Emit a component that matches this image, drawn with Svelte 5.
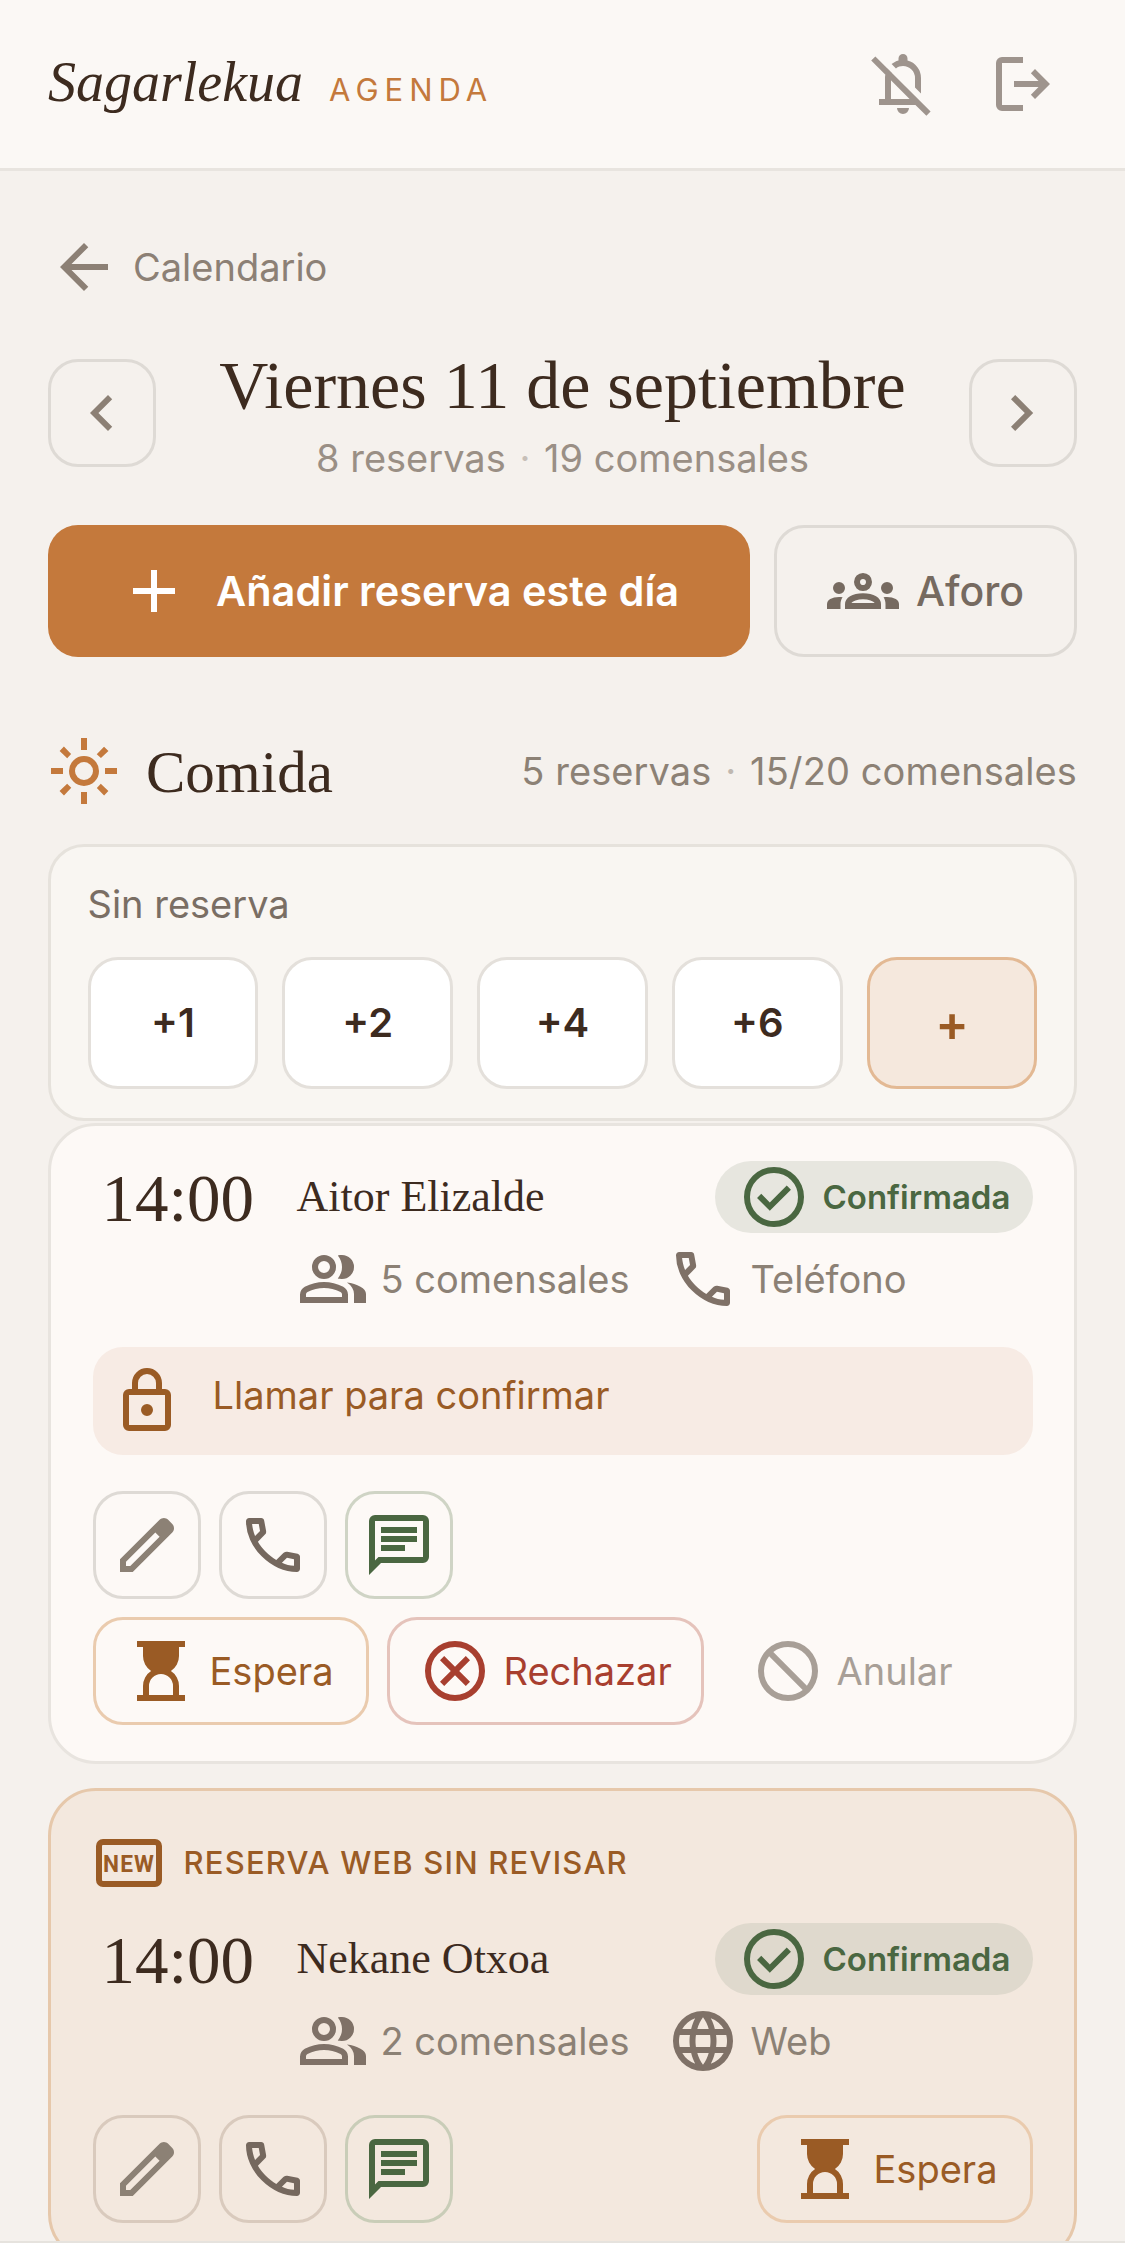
<script>
  const icons = {
    bellOff: "M160-200v-80h80v-280q0-33 8.5-65t25.5-61l60 60q-7 16-10.5 32.5T320-560v280h248L56-792l56-56 736 736-56 56-146-144H160Zm560-154-80-80v-126q0-66-47-113t-113-47q-26 0-50 8t-44 24l-58-58q20-16 43-28t49-18v-28q0-25 17.5-42.5T480-880q25 0 42.5 17.5T540-820v28q80 20 130 84.5T720-560v206ZM480-80q-33 0-56.5-23.5T400-160h160q0 33-23.5 56.5T480-80Z",
    logout: "M200-120q-33 0-56.5-23.5T120-200v-560q0-33 23.5-56.5T200-840h280v80H200v560h280v80H200Zm440-160-55-58 102-102H360v-80h327L585-622l55-58 200 200-200 200Z",
    back: "M313-440l224 224-57 56-320-320 320-320 57 56-224 224h487v80H313Z",
    left: "M560-240 320-480l240-240 56 56-184 184 184 184-56 56Z",
    right: "M504-480 320-664l56-56 240 240-240 240-56-56 184-184Z",
    add: "M440-440H200v-80h240v-240h80v240h240v80H520v240h-80v-240Z",
    groups: "M0-240v-63q0-43 44-70t116-27q13 0 25 .5t23 2.5q-14 21-21 44t-7 48v65H0Zm240 0v-65q0-32 17.5-58.5T307-410q32-20 76.5-30t96.5-10q53 0 97.5 10t76.5 30q32 20 49 46.5t17 58.5v65H240Zm540 0v-65q0-26-6.5-49T754-397q11-2 22.5-2.5t23.5-.5q72 0 116 26.5t44 70.5v63H780Zm-455-80h311q-10-20-55.5-35T480-370q-55 0-100.5 15T325-320ZM160-440q-33 0-56.5-23.5T80-520q0-34 23.5-57t56.5-23q34 0 57 23t23 57q0 33-23 56.5T160-440Zm640 0q-33 0-56.5-23.5T720-520q0-34 23.5-57t56.5-23q34 0 57 23t23 57q0 33-23 56.5T800-440Zm-320-40q-50 0-85-35t-35-85q0-51 35-85.5t85-34.5q51 0 85.5 34.5T600-600q0 50-34.5 85T480-480Zm0-80q17 0 28.5-11.5T520-600q0-17-11.5-28.5T480-640q-17 0-28.5 11.5T440-600q0 17 11.5 28.5T480-560Z",
    sun: "M480-360q50 0 85-35t35-85q0-50-35-85t-85-35q-50 0-85 35t-35 85q0 50 35 85t85 35Zm0 80q-83 0-141.5-58.5T280-480q0-83 58.5-141.5T480-680q83 0 141.5 58.5T680-480q0 83-58.5 141.5T480-280ZM200-440H40v-80h160v80Zm720 0H760v-80h160v80ZM440-760v-160h80v160h-80Zm0 720v-160h80v160h-80ZM256-650l-101-97 57-59 96 100-52 56Zm492 496-97-101 53-55 101 97-57 59Zm-98-550 97-101 59 57-100 96-56-52ZM154-212l101-97 55 53-97 101-59-57Z",
    check: "m424-296 282-282-56-56-226 226-114-114-56 56 170 170Zm56 216q-83 0-156-31.5T197-197q-54-54-85.5-127T80-480q0-83 31.5-156T197-763q54-54 127-85.5T480-880q83 0 156 31.5T763-763q54 54 85.5 127T880-480q0 83-31.5 156T763-197q-54 54-127 85.5T480-80Zm0-80q134 0 227-93t93-227q0-134-93-227t-227-93q-134 0-227 93t-93 227q0 134 93 227t227 93Z",
    group: "M40-160v-112q0-34 17.5-62.5T104-378q62-31 126-46.5T360-440q66 0 130 15.5T616-378q29 15 46.5 43.5T680-272v112H40Zm720 0v-120q0-44-24.5-84.5T666-434q51 6 96 20.5t84 35.5q36 20 55 44.5t19 53.5v120H760ZM360-480q-66 0-113-47t-47-113q0-66 47-113t113-47q66 0 113 47t47 113q0 66-47 113t-113 47Zm400-160q0 66-47 113t-113 47q-11 0-28-2.5t-28-5.5q27-32 41.5-71t14.5-81q0-42-14.5-81T544-792q14-5 28-6.5t28-1.5q66 0 113 47t47 113ZM120-240h480v-32q0-11-5.5-20T580-306q-54-27-109-40.5T360-360q-56 0-111 13.5T140-306q-9 5-14.5 14t-5.5 20v32Zm240-320q33 0 56.5-23.5T440-640q0-33-23.5-56.5T360-720q-33 0-56.5 23.5T280-640q0 33 23.5 56.5T360-560Z",
    call: "M798-120q-125 0-247-54.5T329-329Q229-429 174.5-551T120-798q0-18 12-30t30-12h162q14 0 25 9.5t13 22.5l26 140q2 16-1 27t-11 19l-97 98q20 37 47.5 71.5T387-386q31 31 65 57.5t72 48.5l94-94q9-9 23.5-13.5T670-390l138 28q14 4 23 14.5t9 23.5v162q0 18-12 30t-30 12ZM241-600l66-66-17-94h-89q5 41 14 81t26 79Zm358 358q39 17 79.5 27t81.5 13v-88l-94-19-67 67Z",
    lock: "M240-80q-33 0-56.5-23.5T160-160v-400q0-33 23.5-56.5T240-640h40v-80q0-83 58.5-141.5T480-920q83 0 141.5 58.5T680-720v80h40q33 0 56.5 23.5T800-560v400q0 33-23.5 56.5T720-80H240Zm0-80h480v-400H240v400Zm240-120q33 0 56.5-23.5T560-360q0-33-23.5-56.5T480-440q-33 0-56.5 23.5T400-360q0 33 23.5 56.5T480-280ZM360-640h240v-80q0-50-35-85t-85-35q-50 0-85 35t-35 85v80Z",
    edit: "M200-200h57l391-391-57-57-391 391v57Zm-80 80v-170l528-527q12-11 26.5-17t30.5-6q16 0 31 6t26 18l55 56q12 11 17.5 26t5.5 30q0 16-5.5 30.5T817-647L290-120H120Z",
    chat: "M240-400h320v-80H240v80Zm0-120h480v-80H240v80Zm0-120h480v-80H240v80ZM80-80v-720q0-33 23.5-56.5T160-880h640q33 0 56.5 23.5T880-800v480q0 33-23.5 56.5T800-240H240L80-80Zm126-240h594v-480H160v525l46-45Z",
    hourglass: "M320-160h320v-120q0-66-47-113t-113-47q-66 0-113 47t-47 113v120ZM160-80v-80h80v-120q0-61 28.5-114.5T348-480q-51-32-79.5-85.5T240-680v-120h-80v-80h640v80h-80v120q0 61-28.5 114.5T612-480q51 32 79.5 85.5T720-280v120h80v80H160Z",
    cancel: "m336-280 144-144 144 144 56-56-144-144 144-144-56-56-144 144-144-144-56 56 144 144-144 144 56 56ZM480-80q-83 0-156-31.5T197-197q-54-54-85.5-127T80-480q0-83 31.5-156T197-763q54-54 127-85.5T480-880q83 0 156 31.5T763-763q54 54 85.5 127T880-480q0 83-31.5 156T763-197q-54 54-127 85.5T480-80Zm0-80q134 0 227-93t93-227q0-134-93-227t-227-93q-134 0-227 93t-93 227q0 134 93 227t227 93Z",
    block: "M480-80q-83 0-156-31.5T197-197q-54-54-85.5-127T80-480q0-83 31.5-156T197-763q54-54 127-85.5T480-880q83 0 156 31.5T763-763q54 54 85.5 127T880-480q0 83-31.5 156T763-197q-54 54-127 85.5T480-80Zm0-80q54 0 104-17.5t92-50.5L228-676q-33 42-50.5 92T160-480q0 134 93 227t227 93Zm252-124q33-42 50.5-92T800-480q0-134-93-227t-227-93q-54 0-104 17.5T284-732l448 448Z",
    globe: "M480-80q-82 0-155-31.5t-127.5-86Q143-252 111.5-325T80-480q0-83 31.5-155.5t86-127Q252-817 325-848.5T480-880q83 0 155.5 31.5t127 86q54.5 54.5 86 127T880-480q0 82-31.5 155t-86 127.5q-54.5 54.5-127 86T480-80Zm0-82q26-36 45-75t31-83H404q12 44 31 83t45 75Zm-104-16q-18-33-31.5-68.5T322-320H204q29 50 72.5 87t99.5 55Zm208 0q56-18 99.5-55t72.5-87H638q-9 38-22.5 73.5T584-178ZM170-400h136q-3-20-4.5-39.5T300-480q0-21 1.5-40.5T306-560H170q-5 20-7.5 39.5T160-480q0 21 2.5 40.5T170-400Zm216 0h188q3-20 4.5-39.5T580-480q0-21-1.5-40.5T574-560H386q-3 20-4.5 39.5T380-480q0 21 1.5 40.5T386-400Zm268 0h136q5-20 7.5-39.5T800-480q0-21-2.5-40.5T790-560H654q3 20 4.5 39.5T660-480q0 21-1.5 40.5T654-400Zm-16-240h118q-29-50-72.5-87T584-782q18 33 31.5 68.5T638-640Zm-234 0h152q-12-44-31-83t-45-75q-26 36-45 75t-31 83Zm-200 0h118q9-38 22.5-73.5T376-782q-56 18-99.5 55T204-640Z"
  };
  const quick = ["+1", "+2", "+4", "+6"];
</script>

{#snippet icon(name)}
  <svg class="icon" viewBox="0 -960 960 960" aria-hidden="true"><path d={icons[name]} /></svg>
{/snippet}

{#snippet iconRow()}
  <button class="square edit">{@render icon("edit")}</button>
  <button class="square phone">{@render icon("call")}</button>
  <button class="square chat">{@render icon("chat")}</button>
{/snippet}

<div class="page">
  <header class="topbar">
    <div class="brand">
      <span class="logo">Sagarlekua</span>
      <span class="agenda">AGENDA</span>
    </div>
    <div class="top-actions">
      {@render icon("bellOff")}
      {@render icon("logout")}
    </div>
  </header>

  <main>
    <a class="back" href="#top">{@render icon("back")}<span>Calendario</span></a>

    <div class="day-nav">
      <button class="square nav">{@render icon("left")}</button>
      <div class="day-title">
        <h1>Viernes 11 de septiembre</h1>
        <p>8 reservas <i>·</i> 19 comensales</p>
      </div>
      <button class="square nav">{@render icon("right")}</button>
    </div>

    <div class="actions">
      <button class="add">{@render icon("add")}<span>Añadir reserva este día</span></button>
      <button class="aforo">{@render icon("groups")}<span>Aforo</span></button>
    </div>

    <section class="service">
      <div class="service-name">{@render icon("sun")}<h2>Comida</h2></div>
      <p>5 reservas <i>·</i> 15/20 comensales</p>
    </section>

    <div class="walkin">
      <div class="walkin-label">Sin reserva</div>
      <div class="walkin-buttons">
        {#each quick as q}
          <button>{q}</button>
        {/each}
        <button class="more">+</button>
      </div>
    </div>

    <article class="card first">
      <div class="row-main">
        <span class="time">14:00</span>
        <span class="name">Aitor Elizalde</span>
        <span class="pill">{@render icon("check")}<span>Confirmada</span></span>
      </div>
      <div class="meta">
        <span class="meta-item">{@render icon("group")}<span>5 comensales</span></span>
        <span class="meta-item">{@render icon("call")}<span>Teléfono</span></span>
      </div>
      <div class="note">{@render icon("lock")}<span>Llamar para confirmar</span></div>
      <div class="tools">{@render iconRow()}</div>
      <div class="states">
        <button class="state wait">{@render icon("hourglass")}<span>Espera</span></button>
        <button class="state reject">{@render icon("cancel")}<span>Rechazar</span></button>
        <button class="state void">{@render icon("block")}<span>Anular</span></button>
      </div>
    </article>

    <article class="card web">
      <div class="web-flag">
        <svg class="new-badge" viewBox="0 0 66 48" aria-hidden="true">
          <rect x="3" y="3" width="60" height="42" rx="4" />
          <text x="33" y="33" text-anchor="middle" textLength="52" lengthAdjust="spacingAndGlyphs">NEW</text>
        </svg>
        <span>RESERVA WEB SIN REVISAR</span>
      </div>
      <div class="row-main">
        <span class="time">14:00</span>
        <span class="name">Nekane Otxoa</span>
        <span class="pill">{@render icon("check")}<span>Confirmada</span></span>
      </div>
      <div class="meta">
        <span class="meta-item">{@render icon("group")}<span>2 comensales</span></span>
        <span class="meta-item">{@render icon("globe")}<span>Web</span></span>
      </div>
      <div class="tools split">
        <div class="tool-group">{@render iconRow()}</div>
        <button class="state wait">{@render icon("hourglass")}<span>Espera</span></button>
      </div>
    </article>
  </main>
</div>

<style>
  :global(body) {
    margin: 0;
    background: #f5f1ed;
  }

  .page {
    height: 2243px;
    box-sizing: border-box;
    border-bottom: 2px solid #e6e3de;
    overflow: hidden;
    font-family: Inter, "Liberation Sans", sans-serif;
    color: #3d2b1f;
  }

  button {
    font-family: inherit;
    background: none;
    cursor: pointer;
    padding: 0;
    box-sizing: border-box;
  }

  .icon {
    width: 72px;
    height: 72px;
    flex: none;
    fill: currentColor;
    display: block;
  }

  .topbar {
    height: 171px;
    box-sizing: border-box;
    background: #fbf8f5;
    border-bottom: 3px solid #e8e4df;
    padding: 0 66px 0 48px;
    display: flex;
    align-items: center;
    justify-content: space-between;
  }

  .brand {
    display: flex;
    align-items: baseline;
    gap: 26px;
    margin-top: -4px;
  }

  .logo {
    font-family: "Liberation Serif", serif;
    font-style: italic;
    font-size: 56px;
    color: #3d2b1f;
  }

  .agenda {
    font-size: 31px;
    letter-spacing: 6px;
    color: #c4793c;
  }

  .top-actions {
    display: flex;
    gap: 48px;
    color: #9e948d;
  }

  main {
    padding: 60px 48px 0;
  }

  .back {
    display: flex;
    align-items: center;
    gap: 13px;
    color: #8c8075;
    text-decoration: none;
    font-size: 38px;
    height: 72px;
  }

  .day-nav {
    margin-top: 47px;
    display: flex;
    align-items: center;
    justify-content: space-between;
  }

  .square {
    width: 108px;
    height: 108px;
    border-radius: 30px;
    border: 3.5px solid #dedad5;
    display: flex;
    align-items: center;
    justify-content: center;
    color: #8c8075;
  }

  .day-title {
    height: 126px;
    text-align: center;
  }

  h1 {
    margin: 0;
    font-family: "Liberation Serif", serif;
    font-weight: 400;
    font-size: 68px;
    line-height: 70px;
    color: #3d2b1f;
  }

  .day-title p {
    margin: 14px 0 0;
    font-size: 38px;
    line-height: 48px;
    color: #9a8f85;
  }

  p i {
    font-style: normal;
    opacity: 0.5;
    margin: 0 3px;
  }

  .actions {
    margin-top: 49px;
    display: flex;
    gap: 24px;
  }

  .add {
    width: 702px;
    height: 132px;
    border: 0;
    border-radius: 30px;
    background: #c4793c;
    color: #fff;
    font-size: 41.5px;
    font-weight: 600;
    display: flex;
    align-items: center;
    padding-left: 70px;
    gap: 26px;
  }

  .aforo {
    width: 303px;
    height: 132px;
    border: 3.5px solid #dedad5;
    border-radius: 30px;
    color: #766a60;
    font-size: 41px;
    font-weight: 500;
    display: flex;
    align-items: center;
    justify-content: center;
    gap: 17px;
  }

  .service {
    margin-top: 78px;
    height: 72px;
    display: flex;
    align-items: center;
    justify-content: space-between;
  }

  .service-name {
    display: flex;
    align-items: center;
    gap: 26px;
    color: #c4793c;
  }

  h2 {
    margin: 2px 0 0;
    font-family: "Liberation Serif", serif;
    font-weight: 400;
    font-size: 59px;
    color: #3d2b1f;
  }

  .service p {
    margin: 0;
    font-size: 38px;
    letter-spacing: 0.1px;
    color: #8c8175;
  }

  .walkin {
    margin-top: 37px;
    box-sizing: border-box;
    border: 3.5px solid #e6e2dc;
    border-radius: 36px;
    background: #f9f6f2;
    padding: 32.5px 36.5px 29.5px;
  }

  .walkin-label {
    font-size: 38px;
    line-height: 48px;
    color: #7a6e64;
  }

  .walkin-buttons {
    margin-top: 29px;
    display: flex;
    gap: 24px;
  }

  .walkin-buttons button {
    flex: 1;
    height: 132px;
    background: #fff;
    border: 3.5px solid #e4e0db;
    border-radius: 30px;
    font-size: 40px;
    font-weight: 600;
    color: #3d2b1f;
  }

  .walkin-buttons .more {
    background: #f5e8dd;
    border-color: #e3b994;
    color: #9a5b25;
    font-size: 50px;
  }

  .card {
    box-sizing: border-box;
    border: 3.5px solid #e8e4df;
    border-radius: 48px;
    padding: 34.5px 41.5px 36.5px;
  }

  .first {
    margin-top: 2px;
    background: #fdf9f6;
  }

  .web {
    margin-top: 24px;
    padding-top: 47.5px;
    background: #f3e8de;
    border-color: #e6c8ab;
  }

  .row-main {
    display: flex;
    align-items: center;
  }

  .time {
    width: 204px;
    box-sizing: border-box;
    padding: 2px 0 0 9px;
    flex: none;
    font-family: "Liberation Serif", serif;
    font-size: 67px;
    line-height: 70px;
    color: #3d2b1f;
  }

  .name {
    font-family: "Liberation Serif", serif;
    font-size: 44px;
    line-height: 72px;
    color: #3d2b1f;
  }

  .pill {
    margin-left: auto;
    width: 318px;
    height: 72px;
    box-sizing: border-box;
    border-radius: 36px;
    background: #e7e6df;
    color: #4a6741;
    font-size: 33px;
    font-weight: 600;
    display: flex;
    align-items: center;
    padding-left: 23px;
    gap: 13px;
  }

  .web .pill {
    background: #dfd9cd;
  }

  .meta {
    margin-top: 10px;
    padding-left: 204px;
    display: flex;
    gap: 37px;
    color: #8c8175;
    font-size: 38px;
  }

  .meta-item {
    display: flex;
    align-items: center;
    gap: 12px;
  }

  .meta-item .icon {
    color: #7f7167;
  }

  .note {
    margin-top: 32px;
    height: 108px;
    box-sizing: border-box;
    border-radius: 30px;
    background: #f7ebe4;
    color: #9a5b25;
    font-size: 38px;
    display: flex;
    align-items: center;
    padding-left: 18px;
    gap: 30px;
  }

  .note span {
    margin-bottom: 12px;
  }

  .tools {
    margin-top: 36px;
    display: flex;
    gap: 18px;
  }

  .tools.split {
    justify-content: space-between;
  }

  .tool-group {
    display: flex;
    gap: 18px;
  }

  .edit {
    color: #8c8175;
  }

  .phone {
    color: #75685e;
  }

  .chat {
    color: #4a6741;
    border-color: #cfd4c5;
  }

  .web .edit,
  .web .phone {
    border-color: #d9cabd;
  }

  .web .chat {
    border-color: #c9cdb8;
  }

  .states {
    margin-top: 18px;
    display: flex;
    gap: 18px;
  }

  .state {
    height: 108px;
    border: 3.5px solid #eacbae;
    border-radius: 30px;
    font-size: 38px;
    color: #9a5b25;
    display: flex;
    align-items: center;
    gap: 13px;
    padding: 0 27px;
  }

  .wait {
    width: 276px;
    padding-left: 29px;
  }

  .reject {
    width: 317px;
    color: #a83f2f;
    border-color: #e5c3bb;
    padding-left: 29px;
  }

  .void {
    border-color: transparent;
    color: #a89f97;
  }

  .web-flag {
    display: flex;
    align-items: center;
    gap: 22px;
    color: #9a5b25;
    font-size: 31px;
    font-weight: 500;
    letter-spacing: 1.2px;
    height: 48px;
    margin-bottom: 36px;
  }

  .new-badge {
    width: 66px;
    height: 48px;
    flex: none;
    margin-left: 3px;
  }

  .new-badge rect {
    fill: none;
    stroke: #9a5b25;
    stroke-width: 6px;
  }

  .new-badge text {
    font-family: Roboto, sans-serif;
    font-size: 24px;
    font-weight: 700;
    fill: #9a5b25;
  }

  .web .meta {
    margin-top: 10px;
  }

  .web .tools {
    margin-top: 38px;
  }
</style>
